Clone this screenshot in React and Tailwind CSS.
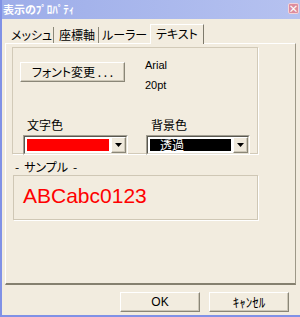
import React from "react";

const raised =
  "border border-t-white border-l-white border-r-[#8a8677] border-b-[#8a8677] shadow-[inset_-1px_-1px_0_#cdc7b7]";

function Combo({ width, children }) {
  return (
    <div
      className={`${width} h-[20px] border border-t-[#a39f92] border-l-[#a39f92] border-r-white border-b-white`}
    >
      <div className="w-full h-full flex bg-white border border-t-[#5a5850] border-l-[#5a5850] border-r-[#e4dfd2] border-b-[#e4dfd2]">
        <div className="flex-1 p-[2px]">{children}</div>
        <div
          className={`w-[15px] h-full flex items-center justify-center bg-[#efe9dc] ${raised}`}
        >
          <svg width="7" height="4" viewBox="0 0 7 4">
            <path d="M0 0h7L3.5 4z" fill="#000" />
          </svg>
        </div>
      </div>
    </div>
  );
}

export default function App() {
  return (
    <div className="w-[300px] h-[317px] bg-[#f2ecdf] border-l-2 border-b-2 border-[#8091e6] flex flex-col overflow-hidden font-['Noto_Sans_CJK_JP',sans-serif] text-[12px] text-black [font-feature-settings:'palt']">
      {/* title bar */}
      <div className="h-[19px] flex items-start justify-between pl-[1px] pr-[1px] bg-gradient-to-r from-[#9dade9] to-[#b6c2f0]">
        <span className="text-white text-[11px] leading-[19px] font-bold">
          表示のﾌﾟﾛﾊﾟﾃｨ
        </span>
        <div className="mt-[3px] w-[11px] h-[11px] rounded-[2px] bg-[#dd8c9d] border border-[#f3d3da] flex items-center justify-center text-white text-[10px] leading-none font-bold">
          ×
        </div>
      </div>

      <div className="flex-1 flex flex-col pl-[3px] pr-[4px] pt-[5px]">
        {/* tabs */}
        <div className="h-[19px] flex items-end">
          <div className="w-[49px] h-[16px] pl-[6px] border-r border-[#8b8878] leading-[16px]">
            メッシュ
          </div>
          <div className="w-[45px] h-[16px] pl-[5px] border-r border-[#8b8878] leading-[16px]">
            座標軸
          </div>
          <div className="w-[51px] h-[16px] pl-[3px] leading-[16px]">ルーラー</div>
          <div className="relative z-10 -mb-px w-[54px] h-[20px] pl-[5px] pt-[1px] bg-[#f2ecdf] border-l border-t border-r border-l-white border-t-white border-r-[#7e7a6c] leading-[16px]">
            テキスト
          </div>
        </div>

        {/* panel */}
        <div className="w-[291px] h-[242px] border-t border-l border-r border-b-2 border-t-white border-l-white border-r-[#9d9888] border-b-[#85806f]">
          <div className="ml-[6px] mt-[3px] w-[246px] h-[107px] border border-[#d2cab8] shadow-[1px_1px_0_#fff]">
            <div className="flex items-start mt-[14px] ml-[7px]">
              <div
                className={`w-[105px] h-[20px] flex items-center justify-center leading-none ${raised}`}
              >
                フォント変更 . . .
              </div>
              <div className="ml-[20px] -mt-[7px] font-['Liberation_Sans',Arial,sans-serif] text-[11px] leading-[20px]">
                <div>Arial</div>
                <div>20pt</div>
              </div>
            </div>

            <div className="flex mt-[22px]">
              <div className="ml-[10px] flex flex-col">
                <div className="pl-[4px] leading-[16px]">文字色</div>
                <div className="mt-[2px]">
                  <Combo width="w-[105px]">
                    <div className="w-full h-full bg-[#ff0000]" />
                  </Combo>
                </div>
              </div>
              <div className="ml-[18px] flex flex-col">
                <div className="pl-[5px] leading-[16px]">背景色</div>
                <div className="mt-[2px]">
                  <Combo width="w-[104px]">
                    <div className="w-full h-full bg-black text-white pl-[10px] leading-[12px]">
                      透過
                    </div>
                  </Combo>
                </div>
              </div>
            </div>
          </div>

          <div className="ml-[9px] mt-[5px] leading-[16px] flex gap-[5px]">
            <span>-</span>
            <span>サンプル</span>
            <span>-</span>
          </div>
          <div className="ml-[7px] w-[245px] h-[45px] border border-[#cfc7b5] shadow-[1px_1px_0_#fff] pl-[9px] pt-[9px]">
            <div className="font-['Liberation_Sans',Arial,sans-serif] text-[21px] leading-[21px] text-[#ff0000]">
              ABCabc0123
            </div>
          </div>
        </div>

        {/* buttons */}
        <div className="mt-[7px] flex justify-end gap-[9px] pr-[7px]">
          <div
            className={`w-[80px] h-[20px] flex items-center justify-center font-['Liberation_Sans',Arial,sans-serif] ${raised}`}
          >
            OK
          </div>
          <div
            className={`w-[80px] h-[20px] flex items-center justify-center text-[13px] ${raised}`}
          >
            ｷｬﾝｾﾙ
          </div>
        </div>
      </div>
    </div>
  );
}
